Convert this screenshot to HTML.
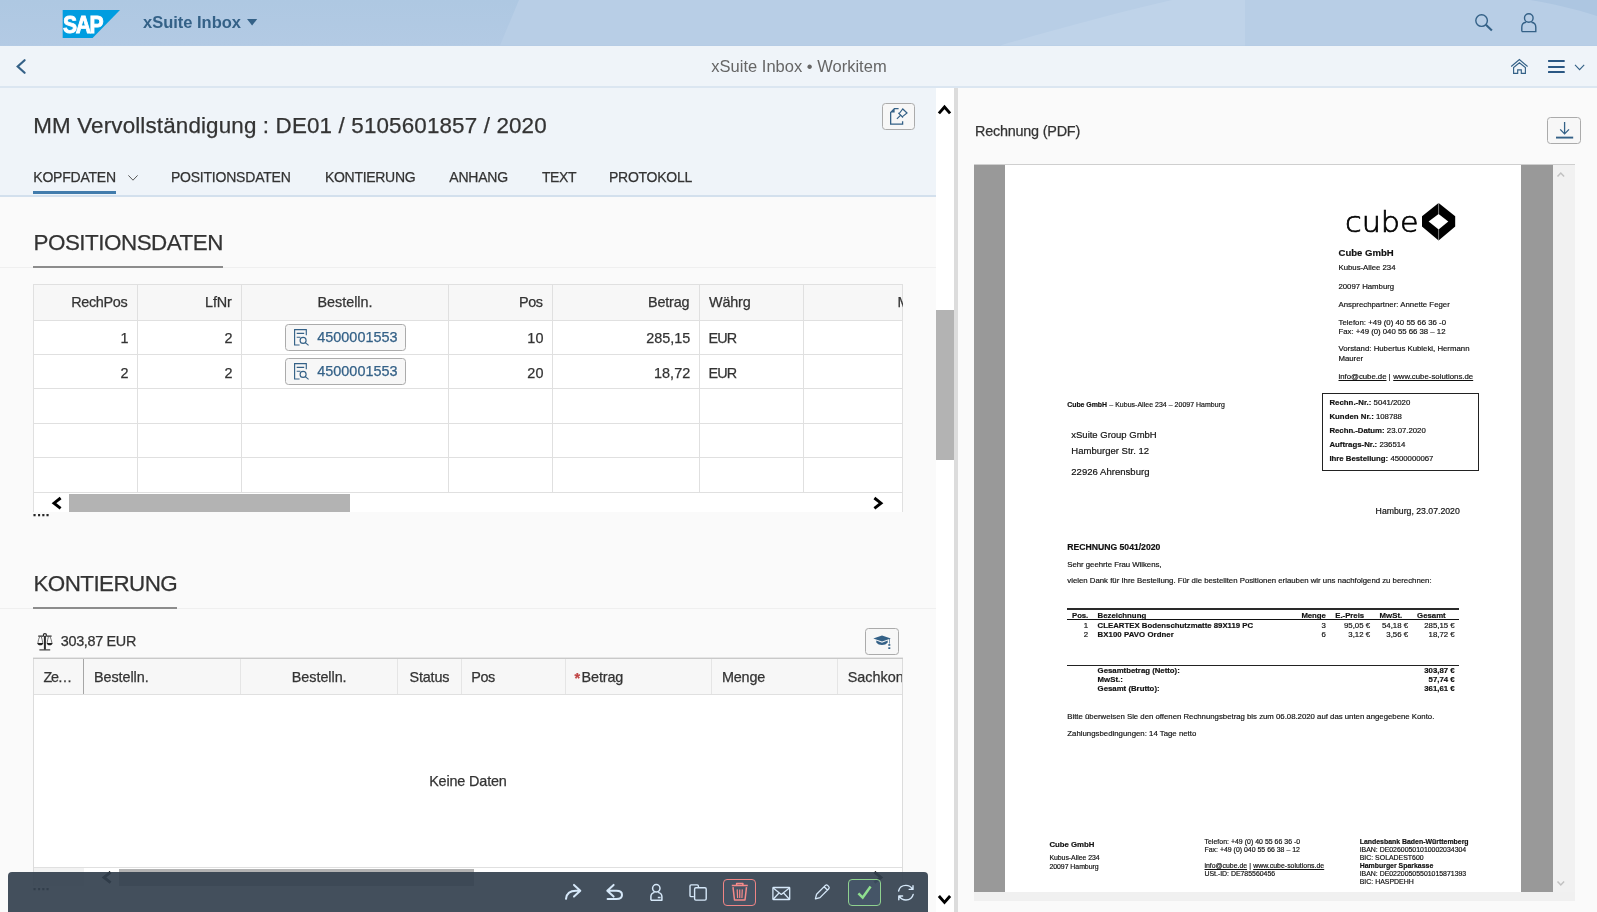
<!DOCTYPE html>
<html lang="de"><head><meta charset="utf-8"><title>xSuite Inbox • Workitem</title>
<style>
html,body{margin:0;padding:0}
body{width:1597px;height:912px;overflow:hidden;position:relative;background:#fafafa;font-family:"Liberation Sans",sans-serif;color:#333}
.a{position:absolute}
.t{position:absolute;white-space:pre;color:#333}
.s{-webkit-text-stroke:0.25px currentColor}
.p{-webkit-text-stroke:0.18px currentColor}
svg{position:absolute;overflow:visible}
#shell{left:0;top:0;width:1597px;height:45.6px;background:#b3c9e3}
#sub{left:0;top:45.6px;width:1597px;height:40.4px;background:#eff4f9}
#subb{left:0;top:86px;width:1597px;height:1.6px;background:#dbe6f1}
#oph{left:0;top:87.6px;width:936px;height:107.4px;background:#eff4f9}
#ophb{left:0;top:195px;width:936px;height:2px;background:#d3e0ed}
#vtrack{left:936px;top:87.6px;width:18px;height:825px;background:#fff}
#vthumb{left:936px;top:310px;width:18px;height:150px;background:#b3b3b3}
#split{left:954px;top:87.6px;width:4px;height:825px;background:#dcdcdc}
.btn{position:absolute;box-sizing:border-box;border:1px solid #ababab;border-radius:3.5px;background:#f7f7f7}
.hl{position:absolute;height:1px;background:#e0e0e0}
.vl{position:absolute;width:1px;background:#e0e0e0}
</style></head><body>
<div class="a" id="shell"></div>
<svg style="left:0;top:0" width="1597" height="46" viewBox="0 0 1597 46"><defs><linearGradient id="hg" x1="0" y1="0" x2="0" y2="1"><stop offset="0" stop-color="#aec8e2"/><stop offset="1" stop-color="#b3cae4"/></linearGradient></defs><rect x="0" y="0" width="1597" height="45.6" fill="#b8cee6"/><path d="M0 0 H519 L500 45.6 H0 Z" fill="url(#hg)"/><path d="M1000 45.6 C1060 28 1120 12 1172 0 H1245 V45.6 Z" fill="#bfd3e9"/><path d="M1530 0 H1597 V16 C1575 9 1555 4 1530 0 Z" fill="#adc6e1"/></svg>
<div class="a" id="sub"></div><div class="a" id="subb"></div>
<div class="a" id="oph"></div><div class="a" id="ophb"></div>
<div class="a" id="vtrack"></div><div class="a" id="vthumb"></div><div class="a" id="split"></div>

<svg style="left:63px;top:10px" width="57" height="28" viewBox="0 0 57 28"><polygon points="-0.3,0 57,0 29.6,27.9 -0.3,27.9" fill="#009de0"/></svg>
<svg style="left:247px;top:19.2px" width="10.2" height="6.6" viewBox="0 0 10.2 6.6"><polygon points="0,0 10.2,0 5.1,6.6" fill="#346187"/></svg>
<svg style="left:1475px;top:13.8px" width="17.6" height="17.2" viewBox="0 0 17.6 17.2" fill="none" stroke="#346187"><circle cx="6.6" cy="6.6" r="5.8" stroke-width="1.4"/><path d="M10.9 10.7 L16.9 16.5" stroke-width="2.1"/></svg>
<svg style="left:1521.2px;top:12.8px" width="15.6" height="19.4" viewBox="0 0 15.6 19.4" fill="none" stroke="#346187" stroke-width="1.4"><circle cx="7.8" cy="5" r="4.3"/><path d="M0.8 18.6 V14.2 C0.8 11.4 3 9.6 5.2 9.3 M10.4 9.3 C12.6 9.6 14.8 11.4 14.8 14.2 V18.6 H0.8"/></svg>
<svg style="left:16.2px;top:59px" width="9.6" height="15" viewBox="0 0 9.6 15" fill="none" stroke="#346187" stroke-width="2.2" stroke-linecap="round"><path d="M8.6 1.2 L1.7 7.5 L8.6 13.8"/></svg>
<svg style="left:0;top:0" width="1597" height="912" viewBox="0 0 1597 912" fill="none" stroke="#346187" stroke-width="1.15"><path d="M1511.2 66.5 L1519.4 59.5 L1527.6 66.5"/><path d="M1513.6 73.4 V67.5 L1519.4 62.7 L1525.4 67.5 V73.4 H1521.3 V69.8 H1517.7 V73.4 Z"/></svg>
<svg style="left:1548.3px;top:60px" width="16.8" height="13" viewBox="0 0 16.8 13" fill="#2a5783"><rect x="0" y="0" width="16.8" height="1.9" rx="0.6"/><rect x="0" y="6.05" width="16.8" height="1.9" rx="0.6"/><rect x="0" y="11.05" width="16.8" height="1.95" rx="0.6"/></svg>
<svg style="left:0;top:0" width="1597" height="912" viewBox="0 0 1597 912" fill="none" stroke="#346187" stroke-width="1.1"><path d="M1575 64.9 L1579.6 69.7 L1584.2 64.9"/></svg>
<div class="btn" style="left:882px;top:103px;width:33px;height:27px"></div>
<svg style="left:890px;top:108px" width="18" height="17" viewBox="0 0 18 17" fill="none" stroke="#346187" stroke-width="1.3"><path d="M8.6 0.65 H4.4 L0.65 4.4 V16.2 H12.6 V13.2"/><path d="M4.6 0.8 V4.6 H0.8 Z" fill="#346187" stroke="none"/><path d="M6.9 10.9 L11 6.8" stroke-width="1.2"/><path d="M8.3 4.9 L13 9.5 M9.2 5.5 L12.8 1 L17 5 L12.5 8.6" stroke-width="1.2"/></svg>
<div class="a" style="left:33px;top:191px;width:83px;height:3px;background:#427cac"></div>
<svg style="left:128px;top:174.8px" width="10" height="5.8" viewBox="0 0 10 5.8" fill="none" stroke="#555" stroke-width="1"><path d="M0.4 0.4 L5 5.2 L9.6 0.4"/></svg>
<div class="a" style="left:0;top:266.6px;width:936px;height:1px;background:#efefef"></div>
<div class="a" style="left:33px;top:266px;width:190px;height:2px;background:#8c8c8c"></div>
<div class="a" style="left:33px;top:284.6px;width:869.4px;height:35.5px;background:#f7f7f7"></div>
<div class="a" style="left:33px;top:320.1px;width:869.4px;height:191.89999999999998px;background:#fff"></div>
<div class="hl" style="left:33px;top:284.1px;width:870px"></div>
<div class="hl" style="left:33px;top:319.6px;width:870px"></div>
<div class="hl" style="left:33px;top:353.8px;width:870px"></div>
<div class="hl" style="left:33px;top:387.8px;width:870px"></div>
<div class="hl" style="left:33px;top:422.9px;width:870px"></div>
<div class="hl" style="left:33px;top:457.0px;width:870px"></div>
<div class="hl" style="left:33px;top:492.0px;width:870px"></div>
<div class="vl" style="left:32.5px;top:284.6px;height:227.4px"></div>
<div class="vl" style="left:137.0px;top:284.6px;height:207.9px"></div>
<div class="vl" style="left:241.2px;top:284.6px;height:207.9px"></div>
<div class="vl" style="left:447.7px;top:284.6px;height:207.9px"></div>
<div class="vl" style="left:552.0px;top:284.6px;height:207.9px"></div>
<div class="vl" style="left:699.1px;top:284.6px;height:207.9px"></div>
<div class="vl" style="left:803.1px;top:284.6px;height:207.9px"></div>
<div class="vl" style="left:901.9px;top:284.6px;height:227.4px"></div>
<div class="btn" style="left:285.2px;top:324.4px;width:120.4px;height:26.6px"></div>
<svg style="left:293.9px;top:329.3px" width="15.2" height="16.8" viewBox="0 0 15.2 16.8" fill="none" stroke="#346187" stroke-width="1.15"><path d="M12.3 6.2 V0.6 H0.6 V16 H5.6"/><path d="M2.7 4.3 H10.2 M2.7 8.3 H6.4"/><circle cx="9.1" cy="11.4" r="3"/><path d="M11.3 13.6 L14.6 16.4"/></svg>
<div class="btn" style="left:285.2px;top:358.4px;width:120.4px;height:26.6px"></div>
<svg style="left:293.9px;top:363.3px" width="15.2" height="16.8" viewBox="0 0 15.2 16.8" fill="none" stroke="#346187" stroke-width="1.15"><path d="M12.3 6.2 V0.6 H0.6 V16 H5.6"/><path d="M2.7 4.3 H10.2 M2.7 8.3 H6.4"/><circle cx="9.1" cy="11.4" r="3"/><path d="M11.3 13.6 L14.6 16.4"/></svg>
<div class="a" style="left:69px;top:494px;width:281px;height:17.5px;background:#b3b3b3"></div>
<svg style="left:0;top:0" width="1597" height="912" viewBox="0 0 1597 912" fill="none" stroke="#000" stroke-width="2.9"><path d="M60.6 498 L54 503.2 L60.6 508.4"/><path d="M874.4 498 L881 503.2 L874.4 508.4"/></svg>
<div class="a" style="left:0;top:607.6px;width:936px;height:1px;background:#efefef"></div>
<div class="a" style="left:33px;top:607px;width:144px;height:2px;background:#8c8c8c"></div>
<svg style="left:37px;top:632.6px" width="16" height="18" viewBox="0 0 16 18" fill="none" stroke="#2b2b2b" stroke-width="1.1"><circle cx="7.9" cy="2.1" r="1.55" stroke-width="1.2"/><path d="M1.2 3.1 H6.3 M9.5 3.1 H14.6" stroke-width="1.05"/><path d="M7.9 3.6 V16.6" stroke-width="2"/><path d="M2.4 16.9 H13.2" stroke-width="1.1"/><path d="M2.9 3.4 C1.6 5.6 1.2 8 0.9 10.2 M4.2 3.4 C5 5.6 5.4 8 5.8 10.2 M11.5 3.4 C10.8 5.6 10.4 8 10.1 10.2 M13 3.4 C14 5.6 14.6 8 15 10.2" stroke-width="0.8" stroke="#555"/><path d="M0.2 10 H6.3 C6 11.6 4.8 12.3 3.25 12.3 C1.7 12.3 0.5 11.6 0.2 10 Z M9.7 10 H15.6 C15.3 11.6 14.2 12.3 12.65 12.3 C11.1 12.3 10 11.6 9.7 10 Z" fill="#222" stroke="none"/></svg>
<div class="btn" style="left:865.3px;top:627.9px;width:33.5px;height:26.8px"></div>
<svg style="left:873px;top:635px" width="19" height="15" viewBox="0 0 19 15" fill="#346187"><path d="M0.3 3.5 L9 0.6 L17.9 3.4 L9 6.5 Z"/><path d="M3.3 5.6 L9 7.7 L14.7 5.6 V7.4 C13.4 9.1 11.4 9.9 9 9.9 C6.6 9.9 4.6 9.1 3.3 7.4 Z"/><rect x="16" y="3.8" width="0.9" height="4.8" opacity="0.75"/><rect x="15.3" y="9.1" width="2" height="1.7"/><rect x="15.3" y="12.3" width="2" height="1.7"/></svg>
<div class="a" style="left:33px;top:659px;width:869.4px;height:35.4px;background:#f7f7f7"></div>
<div class="a" style="left:33px;top:694.4px;width:869.4px;height:191.6px;background:#fff"></div>
<div class="a" style="left:33px;top:657px;width:870px;height:1px;background:#e6e6e6"></div>
<div class="a" style="left:33px;top:658px;width:870px;height:1px;background:#c9c9c9"></div>
<div class="hl" style="left:33px;top:694px;width:870px"></div>
<div class="hl" style="left:33px;top:867px;width:870px"></div>
<div class="a" style="left:33.5px;top:868px;width:50.5px;height:18px;background:#f2f2f2"></div>
<div class="vl" style="left:32.9px;top:659px;height:227px;background:#dcdcdc"></div>
<div class="vl" style="left:902px;top:659px;height:227px;background:#dcdcdc"></div>
<div class="vl" style="left:82.9px;top:659.4px;height:35px;background:#a6a6a6"></div>
<div class="vl" style="left:239.6px;top:659.4px;height:35px;background:#e5e5e5"></div>
<div class="vl" style="left:397.1px;top:659.4px;height:35px;background:#e5e5e5"></div>
<div class="vl" style="left:460.9px;top:659.4px;height:35px;background:#e5e5e5"></div>
<div class="vl" style="left:564.9px;top:659.4px;height:35px;background:#e5e5e5"></div>
<div class="vl" style="left:711.1px;top:659.4px;height:35px;background:#e5e5e5"></div>
<div class="vl" style="left:836.8px;top:659.4px;height:35px;background:#e5e5e5"></div>
<div class="a" style="left:119px;top:869px;width:354.8px;height:16.8px;background:#b3b3b3"></div>
<svg style="left:0;top:0" width="1597" height="912" viewBox="0 0 1597 912" fill="none" stroke="#000" stroke-width="2.9"><path d="M110.6 872.2 L104 877.4 L110.6 882.6"/><path d="M874.4 872.2 L881 877.4 L874.4 882.6"/></svg>
<svg style="left:938.3px;top:104.8px" width="13" height="9.4" viewBox="0 0 13 9.4" fill="none" stroke="#000" stroke-width="2.9"><path d="M0.9 8.4 L6.5 2 L12.1 8.4"/></svg>
<svg style="left:938.4px;top:894.6px" width="13" height="9.4" viewBox="0 0 13 9.4" fill="none" stroke="#000" stroke-width="2.9"><path d="M0.9 1 L6.5 7.4 L12.1 1"/></svg>
<div class="btn" style="left:1547.4px;top:117.1px;width:33.5px;height:26.9px"></div>
<svg style="left:1555.6px;top:122px" width="17.2" height="16.6" viewBox="0 0 17.2 16.6" fill="none" stroke="#346187" stroke-width="1.3"><path d="M8.6 0 V11.6 M4.2 7.4 L8.6 11.9 L13 7.4"/><path d="M0 15.6 H17.2" stroke-width="1.9"/></svg>
<div class="a" style="left:974px;top:164.4px;width:578.7px;height:727.2px;background:#999"></div>
<div class="a" style="left:1005px;top:164.4px;width:515.5px;height:727.2px;background:#fff"></div>
<div class="a" style="left:974px;top:164px;width:600.6px;height:1px;background:#cfcfcf"></div>
<div class="a" style="left:1552.7px;top:165px;width:22px;height:726.6px;background:#f1f1f1"></div>
<div class="a" style="left:974px;top:891.6px;width:600.6px;height:9px;background:#f0f0f0"></div>
<svg style="left:1557.4px;top:171.5px" width="7.6" height="5" viewBox="0 0 7.6 5" fill="none" stroke="#c1c1c1" stroke-width="1.5"><path d="M0.5 4.6 L3.8 1 L7.1 4.6"/></svg>
<svg style="left:1557.4px;top:881px" width="7.6" height="5" viewBox="0 0 7.6 5" fill="none" stroke="#c1c1c1" stroke-width="1.5"><path d="M0.5 0.4 L3.8 4 L7.1 0.4"/></svg>
<svg style="left:1422px;top:203px" width="33.2" height="37.4" viewBox="0 0 33.2 37.4"><path d="M16.6 0 L33.2 13.2 V23.4 L16.6 37.4 L0 23.4 V13.2 Z" fill="#000"/><path d="M16.6 11.1 L26.3 18.5 L16.6 26.6 L6.6 18.5 Z" fill="#fff"/><path d="M16.6 0 V11.5 M16.6 26.2 V37.4" stroke="#fff" stroke-width="0.5"/></svg>
<div class="a" style="left:1322.2px;top:393px;width:156.8px;height:78.2px;box-sizing:border-box;border:1px solid #222;background:#fff"></div>
<div class="a" style="left:1067.3px;top:608.4px;width:392px;height:2px;background:#2a2a2a"></div>
<div class="a" style="left:1067.3px;top:619.2px;width:392px;height:1px;background:#111"></div>
<div class="a" style="left:1067.3px;top:665.1px;width:392px;height:0.9px;background:#222"></div>
<div class="a" style="left:0;top:0;width:1597px;height:912px;will-change:transform">
<span class="t" style="left:62.9px;top:11px;font-size:23.6px;line-height:28px;font-weight:700;color:#fff;letter-spacing:-1.6px;-webkit-text-stroke:0.9px #fff;transform:scaleX(0.895);transform-origin:0 0">SAP</span>
<span class="t" style="left:143.00px;top:12px;font-size:16.5px;line-height:20px;font-weight:700;color:#346187;letter-spacing:-0.009px;">xSuite Inbox</span>
<span class="t" style="left:711.35px;top:56px;font-size:16.5px;line-height:20px;color:#666;letter-spacing:0.008px;">xSuite Inbox • Workitem</span>
<span class="t s" style="left:33.30px;top:112px;font-size:22.4px;line-height:27px;letter-spacing:0.146px;">MM Vervollständigung : DE01 / 5105601857 / 2020</span>
<span class="t s" style="left:33.30px;top:168px;font-size:14px;line-height:18px;letter-spacing:-0.226px;">KOPFDATEN</span>
<span class="t s" style="left:170.90px;top:168px;font-size:14px;line-height:18px;letter-spacing:-0.211px;">POSITIONSDATEN</span>
<span class="t s" style="left:325.00px;top:168px;font-size:14px;line-height:18px;letter-spacing:-0.304px;">KONTIERUNG</span>
<span class="t s" style="left:449.30px;top:168px;font-size:14px;line-height:18px;letter-spacing:-0.234px;">ANHANG</span>
<span class="t s" style="left:542.00px;top:168px;font-size:14px;line-height:18px;letter-spacing:-0.445px;">TEXT</span>
<span class="t s" style="left:609.00px;top:168px;font-size:14px;line-height:18px;letter-spacing:-0.259px;">PROTOKOLL</span>
<span class="t s" style="left:33.50px;top:229px;font-size:22.4px;line-height:27px;letter-spacing:-0.483px;">POSITIONSDATEN</span>
<span class="t s" style="left:71.34px;top:293px;font-size:14.4px;line-height:18px;letter-spacing:-0.358px;">RechPos</span>
<span class="t s" style="left:205.05px;top:293px;font-size:14.4px;line-height:18px;letter-spacing:-0.147px;">LfNr</span>
<span class="t s" style="left:317.49px;top:293px;font-size:14.4px;line-height:18px;letter-spacing:-0.023px;">Bestelln.</span>
<span class="t s" style="left:519.00px;top:293px;font-size:14.4px;line-height:18px;letter-spacing:-0.404px;">Pos</span>
<span class="t s" style="left:647.95px;top:293px;font-size:14.4px;line-height:18px;letter-spacing:-0.151px;">Betrag</span>
<span class="t s" style="left:709.00px;top:293px;font-size:14.4px;line-height:18px;letter-spacing:-0.158px;">Währg</span>
<span class="t s" style="left:897.50px;top:293px;font-size:14.4px;line-height:18px;width:5px;overflow:hidden;">M</span>
<span class="t s" style="left:120.38px;top:329px;font-size:14.4px;line-height:18px;">1</span>
<span class="t s" style="left:224.48px;top:329px;font-size:14.4px;line-height:18px;">2</span>
<span class="t s" style="left:527.34px;top:329px;font-size:14.4px;line-height:18px;letter-spacing:0.142px;">10</span>
<span class="t s" style="left:646.20px;top:329px;font-size:14.4px;line-height:18px;letter-spacing:-0.003px;">285,15</span>
<span class="t s" style="left:708.50px;top:329px;font-size:14.4px;line-height:18px;letter-spacing:-0.93px;">EUR</span>
<span class="t s" style="left:120.38px;top:364px;font-size:14.4px;line-height:18px;">2</span>
<span class="t s" style="left:224.48px;top:364px;font-size:14.4px;line-height:18px;">2</span>
<span class="t s" style="left:527.34px;top:364px;font-size:14.4px;line-height:18px;letter-spacing:0.142px;">20</span>
<span class="t s" style="left:654.04px;top:364px;font-size:14.4px;line-height:18px;letter-spacing:0.037px;">18,72</span>
<span class="t s" style="left:708.50px;top:364px;font-size:14.4px;line-height:18px;letter-spacing:-0.93px;">EUR</span>
<span class="t s" style="left:317.30px;top:328px;font-size:14.4px;line-height:18px;color:#346187;letter-spacing:0.015px;">4500001553</span>
<span class="t s" style="left:317.30px;top:362px;font-size:14.4px;line-height:18px;color:#346187;letter-spacing:0.015px;">4500001553</span>
<span class="t s" style="left:32.80px;top:503px;font-size:13px;line-height:17px;font-weight:700;color:#222;letter-spacing:0.737px;">....</span>
<span class="t s" style="left:33.50px;top:570px;font-size:22.4px;line-height:27px;letter-spacing:-0.568px;">KONTIERUNG</span>
<span class="t s" style="left:60.80px;top:632px;font-size:14.4px;line-height:18px;letter-spacing:-0.321px;">303,87 EUR</span>
<span class="t s" style="left:43.60px;top:668px;font-size:14.4px;line-height:18px;letter-spacing:-1.263px;">Ze…</span>
<span class="t s" style="left:94.00px;top:668px;font-size:14.4px;line-height:18px;letter-spacing:-0.067px;">Bestelln.</span>
<span class="t s" style="left:291.78px;top:668px;font-size:14.4px;line-height:18px;letter-spacing:-0.045px;">Bestelln.</span>
<span class="t s" style="left:409.50px;top:668px;font-size:14.4px;line-height:18px;letter-spacing:-0.169px;">Status</span>
<span class="t s" style="left:471.20px;top:668px;font-size:14.4px;line-height:18px;letter-spacing:-0.404px;">Pos</span>
<span class="t s" style="left:574.40px;top:669px;font-size:14.4px;line-height:18px;font-weight:700;color:#c14646;">*</span>
<span class="t s" style="left:581.60px;top:668px;font-size:14.4px;line-height:18px;letter-spacing:-0.134px;">Betrag</span>
<span class="t s" style="left:722.00px;top:668px;font-size:14.4px;line-height:18px;letter-spacing:-0.203px;">Menge</span>
<span class="t s" style="left:847.70px;top:668px;font-size:14.4px;line-height:18px;width:54.3px;overflow:hidden;">Sachkonto</span>
<span class="t s" style="left:429.13px;top:772px;font-size:14.4px;line-height:18px;letter-spacing:-0.147px;">Keine Daten</span>
<span class="t s" style="left:32.80px;top:877px;font-size:13px;line-height:17px;font-weight:700;color:#222;letter-spacing:0.737px;">....</span>
<span class="t s" style="left:975.00px;top:122px;font-size:14.4px;line-height:18px;letter-spacing:-0.213px;">Rechnung (PDF)</span>
<span class="t" style="left:1344.60px;top:206px;font-size:28.3px;line-height:34px;color:#000;font-family:'DejaVu Sans','Liberation Sans',sans-serif;font-weight:200;-webkit-text-stroke:0.7px #000;transform:scaleX(1.07);transform-origin:0 0;">cube</span>
<span class="t p" style="left:1338.50px;top:246px;font-size:9.55px;line-height:13px;font-weight:700;color:#111;letter-spacing:0.003px;">Cube GmbH</span>
<span class="t p" style="left:1338.50px;top:262px;font-size:7.8px;line-height:11px;color:#111;letter-spacing:-0.015px;">Kubus-Allee 234</span>
<span class="t p" style="left:1338.50px;top:281px;font-size:7.8px;line-height:11px;color:#111;letter-spacing:-0.025px;">20097 Hamburg</span>
<span class="t p" style="left:1338.50px;top:299px;font-size:7.8px;line-height:11px;color:#111;letter-spacing:0.011px;">Ansprechpartner: Annette Feger</span>
<span class="t p" style="left:1338.50px;top:317px;font-size:7.8px;line-height:11px;color:#111;letter-spacing:0.024px;">Telefon: +49 (0) 40 55 66 36 -0</span>
<span class="t p" style="left:1338.50px;top:326px;font-size:7.8px;line-height:11px;color:#111;letter-spacing:-0.01px;">Fax: +49 (0) 040 55 66 38 – 12</span>
<span class="t p" style="left:1338.50px;top:343px;font-size:7.8px;line-height:11px;color:#111;letter-spacing:0.003px;">Vorstand: Hubertus Kubieki, Hermann</span>
<span class="t p" style="left:1338.50px;top:353px;font-size:7.8px;line-height:11px;color:#111;letter-spacing:-0.017px;">Maurer</span>
<span class="t p" style="left:1338.50px;top:371px;font-size:7.8px;line-height:11px;color:#111;letter-spacing:-0.02px;text-decoration:underline;">info@cube.de</span>
<span class="t p" style="left:1388.60px;top:371px;font-size:7.8px;line-height:11px;color:#111;">|</span>
<span class="t p" style="left:1393.20px;top:371px;font-size:7.8px;line-height:11px;color:#111;letter-spacing:0.012px;text-decoration:underline;">www.cube-solutions.de</span>
<span class="t p" style="left:1329.40px;top:397px;font-size:7.8px;line-height:11px;font-weight:700;color:#111;letter-spacing:0.037px;">Rechn.-Nr.:</span>
<span class="t p" style="left:1373.60px;top:397px;font-size:7.8px;line-height:11px;color:#111;letter-spacing:-0.029px;">5041/2020</span>
<span class="t p" style="left:1329.40px;top:411px;font-size:7.8px;line-height:11px;font-weight:700;color:#111;letter-spacing:0.028px;">Kunden Nr.:</span>
<span class="t p" style="left:1376.10px;top:411px;font-size:7.8px;line-height:11px;color:#111;letter-spacing:-0.072px;">108788</span>
<span class="t p" style="left:1329.40px;top:425px;font-size:7.8px;line-height:11px;font-weight:700;color:#111;letter-spacing:-0.019px;">Rechn.-Datum:</span>
<span class="t p" style="left:1386.80px;top:425px;font-size:7.8px;line-height:11px;color:#111;letter-spacing:-0.003px;">23.07.2020</span>
<span class="t p" style="left:1329.40px;top:439px;font-size:7.8px;line-height:11px;font-weight:700;color:#111;letter-spacing:0.011px;">Auftrags-Nr.:</span>
<span class="t p" style="left:1379.40px;top:439px;font-size:7.8px;line-height:11px;color:#111;letter-spacing:-0.005px;">236514</span>
<span class="t p" style="left:1329.40px;top:453px;font-size:7.8px;line-height:11px;font-weight:700;color:#111;letter-spacing:-0.008px;">Ihre Bestellung:</span>
<span class="t p" style="left:1390.40px;top:453px;font-size:7.8px;line-height:11px;color:#111;letter-spacing:-0.037px;">4500000067</span>
<span class="t p" style="left:1067.30px;top:400px;font-size:6.93px;line-height:9px;font-weight:700;color:#111;letter-spacing:-0.044px;">Cube GmbH</span>
<span class="t p" style="left:1109.30px;top:400px;font-size:6.93px;line-height:9px;color:#111;letter-spacing:0.051px;">– Kubus-Allee 234 – 20097 Hamburg</span>
<span class="t p" style="left:1071.30px;top:428px;font-size:9.53px;line-height:13px;color:#111;letter-spacing:-0.017px;">xSuite Group GmbH</span>
<span class="t p" style="left:1071.30px;top:444px;font-size:9.53px;line-height:13px;color:#111;letter-spacing:0.003px;">Hamburger Str. 12</span>
<span class="t p" style="left:1071.30px;top:465px;font-size:9.53px;line-height:13px;color:#111;letter-spacing:0.026px;">22926 Ahrensburg</span>
<span class="t p" style="left:1375.61px;top:505px;font-size:8.7px;line-height:12px;color:#111;letter-spacing:0.008px;">Hamburg, 23.07.2020</span>
<span class="t p" style="left:1067.30px;top:541px;font-size:8.66px;line-height:12px;font-weight:700;color:#111;letter-spacing:-0.019px;">RECHNUNG 5041/2020</span>
<span class="t p" style="left:1067.30px;top:559px;font-size:7.8px;line-height:11px;color:#111;letter-spacing:-0.027px;">Sehr geehrte Frau Wilkens,</span>
<span class="t p" style="left:1067.30px;top:575px;font-size:7.8px;line-height:11px;color:#111;letter-spacing:-0.002px;">vielen Dank für Ihre Bestellung. Für die bestellten Positionen erlauben wir uns nachfolgend zu berechnen:</span>
<span class="t p" style="left:1072.10px;top:610px;font-size:7.8px;line-height:11px;font-weight:700;color:#111;letter-spacing:-0.117px;">Pos.</span>
<span class="t p" style="left:1097.60px;top:610px;font-size:7.8px;line-height:11px;font-weight:700;color:#111;letter-spacing:0.006px;">Bezeichnung</span>
<span class="t p" style="left:1301.40px;top:610px;font-size:7.8px;line-height:11px;font-weight:700;color:#111;letter-spacing:-0.061px;">Menge</span>
<span class="t p" style="left:1335.30px;top:610px;font-size:7.8px;line-height:11px;font-weight:700;color:#111;letter-spacing:-0.031px;">E.-Preis</span>
<span class="t p" style="left:1379.60px;top:610px;font-size:7.8px;line-height:11px;font-weight:700;color:#111;letter-spacing:0.014px;">MwSt.</span>
<span class="t p" style="left:1417.10px;top:610px;font-size:7.8px;line-height:11px;font-weight:700;color:#111;letter-spacing:-0.002px;">Gesamt</span>
<span class="t p" style="left:1083.66px;top:620px;font-size:7.8px;line-height:11px;color:#111;">1</span>
<span class="t p" style="left:1097.60px;top:620px;font-size:7.8px;line-height:11px;font-weight:700;color:#111;letter-spacing:0.002px;">CLEARTEX Bodenschutzmatte 89X119 PC</span>
<span class="t p" style="left:1321.46px;top:620px;font-size:7.8px;line-height:11px;color:#111;">3</span>
<span class="t p" style="left:1343.98px;top:620px;font-size:7.8px;line-height:11px;color:#111;">95,05 €</span>
<span class="t p" style="left:1381.98px;top:620px;font-size:7.8px;line-height:11px;color:#111;">54,18 €</span>
<span class="t p" style="left:1424.24px;top:620px;font-size:7.8px;line-height:11px;color:#111;">285,15 €</span>
<span class="t p" style="left:1083.66px;top:629px;font-size:7.8px;line-height:11px;color:#111;">2</span>
<span class="t p" style="left:1097.60px;top:629px;font-size:7.8px;line-height:11px;font-weight:700;color:#111;letter-spacing:0.064px;">BX100 PAVO Ordner</span>
<span class="t p" style="left:1321.46px;top:629px;font-size:7.8px;line-height:11px;color:#111;">6</span>
<span class="t p" style="left:1348.31px;top:629px;font-size:7.8px;line-height:11px;color:#111;">3,12 €</span>
<span class="t p" style="left:1386.31px;top:629px;font-size:7.8px;line-height:11px;color:#111;">3,56 €</span>
<span class="t p" style="left:1428.58px;top:629px;font-size:7.8px;line-height:11px;color:#111;">18,72 €</span>
<span class="t p" style="left:1097.60px;top:665px;font-size:7.8px;line-height:11px;font-weight:700;color:#111;letter-spacing:-0.005px;">Gesamtbetrag (Netto):</span>
<span class="t p" style="left:1424.24px;top:665px;font-size:7.8px;line-height:11px;font-weight:700;color:#111;">303,87 €</span>
<span class="t p" style="left:1097.60px;top:674px;font-size:7.8px;line-height:11px;font-weight:700;color:#111;letter-spacing:0.012px;">MwSt.:</span>
<span class="t p" style="left:1428.58px;top:674px;font-size:7.8px;line-height:11px;font-weight:700;color:#111;">57,74 €</span>
<span class="t p" style="left:1097.60px;top:683px;font-size:7.8px;line-height:11px;font-weight:700;color:#111;letter-spacing:0.003px;">Gesamt (Brutto):</span>
<span class="t p" style="left:1424.24px;top:683px;font-size:7.8px;line-height:11px;font-weight:700;color:#111;">361,61 €</span>
<span class="t p" style="left:1067.30px;top:711px;font-size:7.8px;line-height:11px;color:#111;letter-spacing:-0.009px;">Bitte überweisen Sie den offenen Rechnungsbetrag bis zum 06.08.2020 auf das unten angegebene Konto.</span>
<span class="t p" style="left:1067.30px;top:728px;font-size:7.8px;line-height:11px;color:#111;letter-spacing:0.011px;">Zahlungsbedingungen: 14 Tage netto</span>
<span class="t p" style="left:1049.40px;top:839px;font-size:7.8px;line-height:11px;font-weight:700;color:#111;letter-spacing:-0.007px;">Cube GmbH</span>
<span class="t p" style="left:1049.40px;top:853px;font-size:6.93px;line-height:9px;color:#111;letter-spacing:-0.033px;">Kubus-Allee 234</span>
<span class="t p" style="left:1049.40px;top:862px;font-size:6.93px;line-height:9px;color:#111;letter-spacing:-0.034px;">20097 Hamburg</span>
<span class="t p" style="left:1204.50px;top:837px;font-size:6.93px;line-height:9px;color:#111;letter-spacing:0.027px;">Telefon: +49 (0) 40 55 66 36 -0</span>
<span class="t p" style="left:1204.50px;top:845px;font-size:6.93px;line-height:9px;color:#111;letter-spacing:0.005px;">Fax: +49 (0) 040 55 66 38 – 12</span>
<span class="t p" style="left:1204.50px;top:861px;font-size:6.93px;line-height:9px;color:#111;letter-spacing:-0.019px;text-decoration:underline;">info@cube.de</span>
<span class="t p" style="left:1249.20px;top:861px;font-size:6.93px;line-height:9px;color:#111;">|</span>
<span class="t p" style="left:1253.20px;top:861px;font-size:6.93px;line-height:9px;color:#111;letter-spacing:0.01px;text-decoration:underline;">www.cube-solutions.de</span>
<span class="t p" style="left:1204.50px;top:869px;font-size:6.93px;line-height:9px;color:#111;letter-spacing:-0.011px;">USt.-ID: DE785560456</span>
<span class="t p" style="left:1359.70px;top:837px;font-size:6.93px;line-height:9px;font-weight:700;color:#111;letter-spacing:0.002px;">Landesbank Baden-Württemberg</span>
<span class="t p" style="left:1359.70px;top:845px;font-size:6.93px;line-height:9px;color:#111;letter-spacing:-0.004px;">IBAN: DE02600501010002034304</span>
<span class="t p" style="left:1359.70px;top:853px;font-size:6.93px;line-height:9px;color:#111;letter-spacing:0.008px;">BIC: SOLADEST600</span>
<span class="t p" style="left:1359.70px;top:861px;font-size:6.93px;line-height:9px;font-weight:700;color:#111;letter-spacing:0.006px;">Hamburger Sparkasse</span>
<span class="t p" style="left:1359.70px;top:869px;font-size:6.93px;line-height:9px;color:#111;letter-spacing:-0.004px;">IBAN: DE02200505501015871393</span>
<span class="t p" style="left:1359.70px;top:877px;font-size:6.93px;line-height:9px;color:#111;letter-spacing:0.011px;">BIC: HASPDEHH</span>
</div>
<div class="a" style="left:8.4px;top:871.8px;width:919.4px;height:41px;background:rgba(52,65,79,0.925);border-radius:4px 4px 0 0"></div>
<div class="a" style="left:723px;top:879.2px;width:33.2px;height:27px;box-sizing:border-box;border:1px solid #f08585;border-radius:4px;background:rgba(72,88,112,0.35)"></div>
<div class="a" style="left:847.9px;top:879.2px;width:33.2px;height:27px;box-sizing:border-box;border:1px solid #8fd18f;border-radius:4px;background:rgba(70,92,116,0.45)"></div>
<svg style="left:0;top:0" width="1597" height="912" viewBox="0 0 1597 912" fill="none" stroke="#d6e8f9" stroke-linecap="round" stroke-linejoin="round">
<g stroke-width="2"><path d="M566 898.8 C566.6 893.4 570.4 890.8 576 890.8 H580 M574 884.9 L580.3 890.8 L574 896.6"/>
<path d="M608 890.8 H616.4 C620 890.8 622 892.6 622 894.9 C622 897.2 620 898.9 616.4 898.9 H607.6 M613.6 884.9 L607.3 890.8 L613.6 896.6"/></g>
<g stroke-width="1.5" stroke-linecap="butt"><circle cx="656.3" cy="888.3" r="3.7"/><path d="M650.9 900.2 V896.6 C650.9 894.4 652.4 893 654.5 892.4 M658.1 892.4 C660.2 893 661.9 894.4 661.9 896.6 V900.2 H650.9 M657.8 897.6 H660.6"/></g>
<g stroke-width="1.4" stroke-linecap="butt"><path d="M693.8 896.6 H691.2 Q690 896.6 690 895.4 V886.1 Q690 884.9 691.2 884.9 H697.2 Q698.4 884.9 698.4 886.1 V887.2"/><rect x="694.6" y="887.7" width="11.6" height="12.4" rx="1.3"/></g>
<g stroke="#f58a8a" stroke-width="1.5" stroke-linecap="butt"><path d="M731.8 885.4 H747.8 M736.6 885 V883.6 H742.9 V885"/><path d="M733 887.2 L734.5 900 H745 L746.5 887.2" /><path d="M737.2 889.4 L737.6 898 M739.75 889.4 V898 M742.3 889.4 L741.9 898" stroke-width="1.2"/></g>
<g stroke-width="1.3" stroke-linecap="butt"><rect x="772.9" y="887.5" width="16.8" height="12" rx="0.6"/><path d="M773.2 887.9 L781.3 894.4 L789.4 887.9 M773.2 899.2 L779 893 M789.4 899.2 L783.6 893"/></g>
<g stroke-width="1.3" stroke-linecap="butt"><path d="M815.4 898.9 L816.6 894.2 L825.4 885.4 C826.2 884.7 827 884.8 827.8 885.6 L828.6 886.4 C829.4 887.2 829.4 888 828.8 888.8 L820 897.6 Z M824.2 886.8 L827.4 890"/></g>
<path d="M858.4 893.4 L862.7 897.6 L870.6 886.6" stroke="#8fdf8f" stroke-width="2.5" stroke-linecap="butt" stroke-linejoin="miter"/>
<g stroke-width="1.4"><path d="M898.6 891 C899.4 887.6 902.4 885.4 905.9 885.4 C908.6 885.4 911 886.8 912.4 889 M913 885.6 V889.4 H909.2"/><path d="M913.2 894.4 C912.4 897.8 909.4 900 905.9 900 C903.2 900 900.8 898.6 899.4 896.4 M898.8 899.8 V896 H902.6"/></g>
</svg>
</body></html>
